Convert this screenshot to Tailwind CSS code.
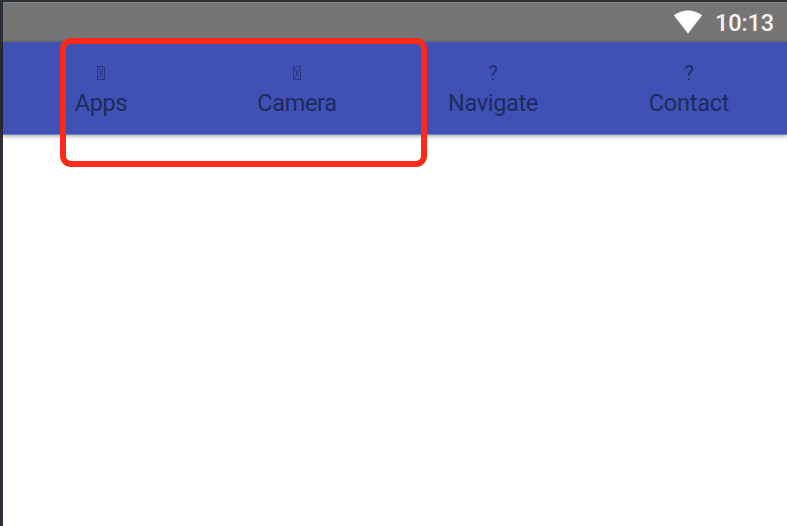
<!DOCTYPE html>
<html lang="en">
<head>
<meta charset="utf-8">
<title>Apps</title>
<script src="https://cdn.jsdelivr.net/npm/@tailwindcss/browser@4"></script>
</head>
<body class="h-screen overflow-hidden bg-[#2b3036] font-[Roboto,sans-serif]">
<div class="relative flex h-full flex-col pt-[2px] pl-[3px]">
  <header class="flex h-10 shrink-0 items-center justify-end border-t border-[#858585] bg-[#757575] pr-[13px]">
    <svg class="mr-[12px] mb-[2px] h-6 w-[30px]" viewBox="0 0 30 24" fill="#fff"><path d="M.8 5.3Q15-4.5 29.2 5.3L15 23.4Z"/></svg>
    <span class="pt-[2px] text-[23.5px] leading-none font-medium tracking-[-0.1px] text-[#f4f4f4]">10:13</span>
  </header>
  <main class="flex-1 bg-white">
    <nav class="grid h-[93px] grid-cols-4 border-b border-[#7580c5] bg-[#3f51b5] text-center text-[#202a5e] shadow-[0_1px_4px_rgba(0,0,0,0.4)]">
      <div class="flex flex-col items-center pt-[22px]">
        <svg class="h-5 w-2" viewBox="0 0 8 20" fill="none" stroke="#2a377f" stroke-width="1"><path d="M.5 2.5h7v13h-7zM2 4.5l4 9M6 4.5l-4 9"/></svg>
        <span class="text-[23.5px] leading-[38px] tracking-[-0.35px]">Apps</span>
      </div>
      <div class="flex flex-col items-center pt-[22px]">
        <svg class="h-5 w-2" viewBox="0 0 8 20" fill="none" stroke="#2a377f" stroke-width="1"><path d="M.5 2.5h7v13h-7zM2 4.5l4 9M6 4.5l-4 9"/></svg>
        <span class="text-[23.5px] leading-[38px] tracking-[-0.35px]">Camera</span>
      </div>
      <div class="flex flex-col items-center pt-[22px]">
        <span class="text-[19.5px] leading-5 text-[#222d68]">?</span>
        <span class="text-[23.5px] leading-[38px] tracking-[-0.35px]">Navigate</span>
      </div>
      <div class="flex flex-col items-center pt-[22px]">
        <span class="text-[19.5px] leading-5 text-[#222d68]">?</span>
        <span class="text-[23.5px] leading-[38px] tracking-[-0.2px]">Contact</span>
      </div>
    </nav>
  </main>
  <div class="absolute top-[38px] left-[60px] h-[129px] w-[367px] rounded-[11px] border-6 border-[#fb2a1b]"></div>
</div>
</body>
</html>
